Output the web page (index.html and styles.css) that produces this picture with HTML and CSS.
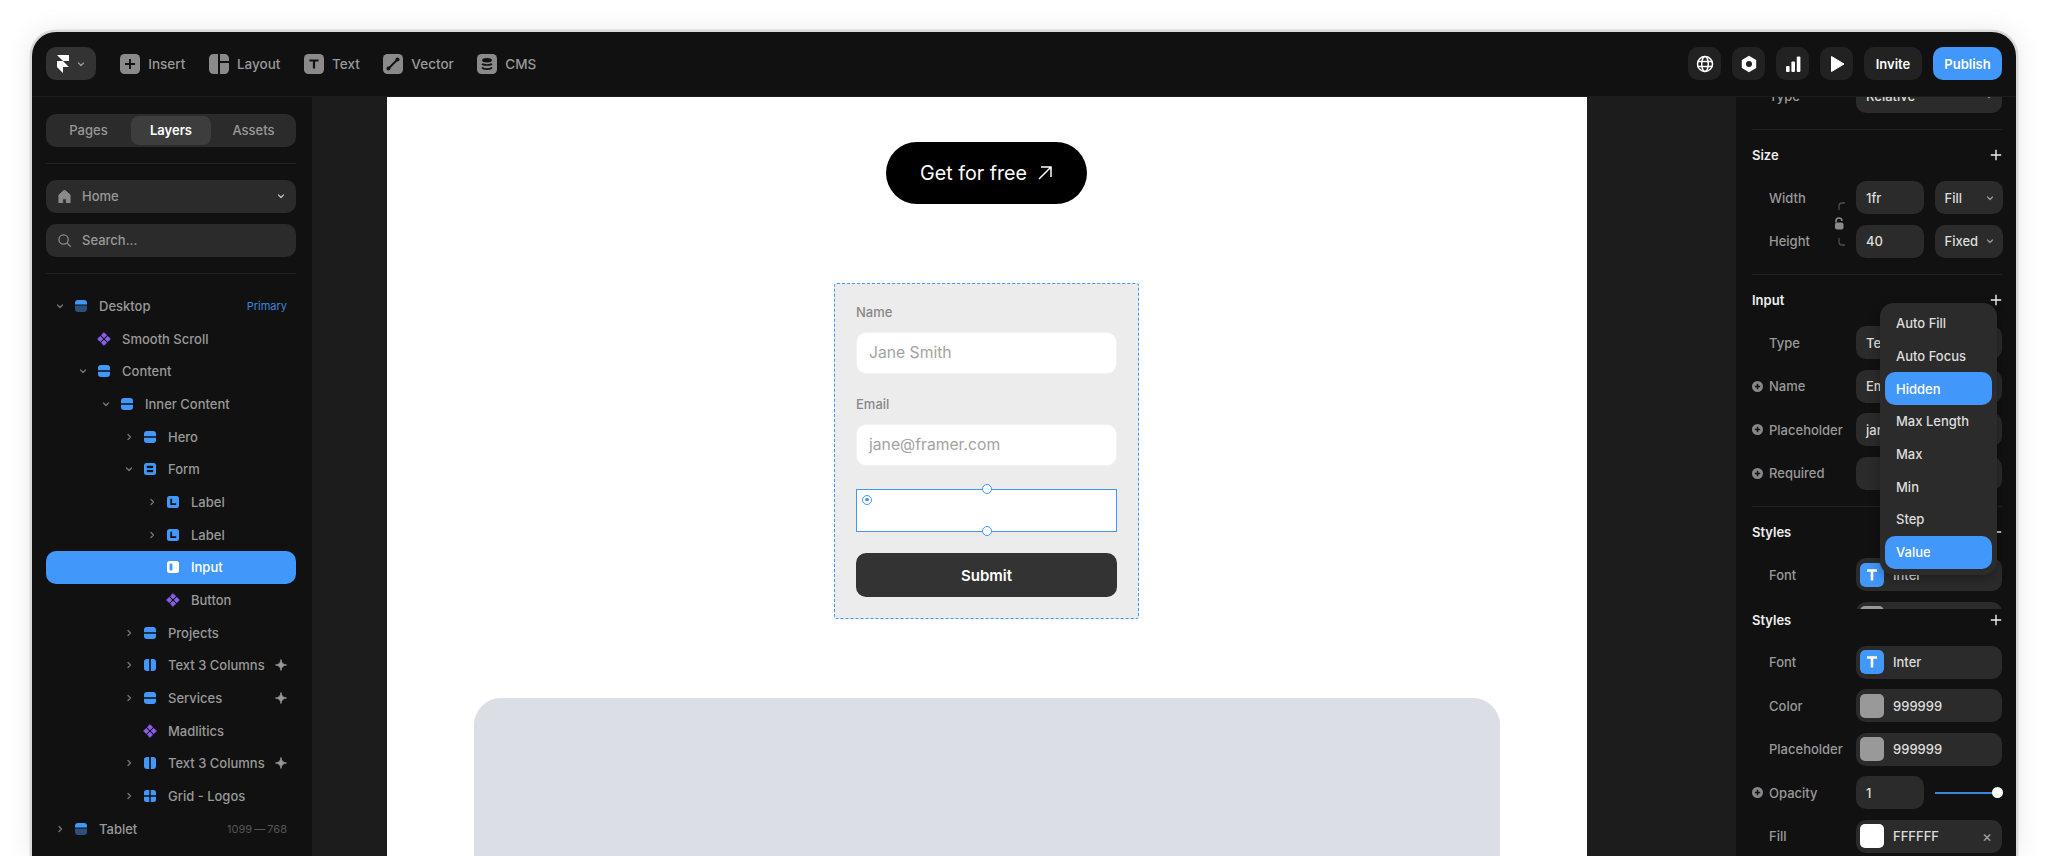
FILE: index.html
```html
<!DOCTYPE html>
<html>
<head>
  <meta charset="utf-8">
  <title>Framer - Form</title>
  <link rel="stylesheet" href="styles.css">
</head>
<body>
  <svg class="defs" width="0" height="0">
    <symbol id="chev-down" viewBox="0 0 12 12"><path d="M3.500 5l2.500 2.500L8.500 5" fill="none" stroke="currentColor" stroke-width="1.300" stroke-linecap="round" stroke-linejoin="round"/></symbol>
    <symbol id="chev-right" viewBox="0 0 12 12"><path d="M5 3.500L7.500 6 5 8.500" fill="none" stroke="currentColor" stroke-width="1.300" stroke-linecap="round" stroke-linejoin="round"/></symbol>
    <symbol id="stack" viewBox="0 0 12 12"><path d="M0 5.200V3a3 3 0 0 1 3-3h6a3 3 0 0 1 3 3v2.200z" fill="#4297fb"/><path d="M0 6.800h12V9a3 3 0 0 1-3 3H3a3 3 0 0 1-3-3z" fill="#4297fb"/></symbol>
    <symbol id="breakpoint" viewBox="0 0 12 12"><path d="M0 4.600V3a3 3 0 0 1 3-3h6a3 3 0 0 1 3 3v1.600z" fill="#4297fb"/><path d="M0 5.400h12V9a3 3 0 0 1-3 3H3a3 3 0 0 1-3-3z" fill="#2a507c"/></symbol>
    <symbol id="form" viewBox="0 0 12 12"><rect width="12" height="12" rx="2.500" fill="#4297fb"/><rect x="2.800" y="2.800" width="6.400" height="2.300" fill="#111"/><rect x="2.800" y="6.900" width="6.400" height="2.300" fill="#111"/></symbol>
    <symbol id="label" viewBox="0 0 12 12"><rect width="12" height="12" rx="2.500" fill="#4297fb"/><path d="M4.200 2.800v5.400h5" fill="none" stroke="#111" stroke-width="1.800"/></symbol>
    <symbol id="input" viewBox="0 0 12 12"><rect width="12" height="12" rx="2.500" fill="#fff"/><rect x="2.600" y="2.600" width="2.800" height="6.800" fill="#4297fb"/></symbol>
    <symbol id="columns" viewBox="0 0 12 12"><path d="M5.200 0v12H3a3 3 0 0 1-3-3V3a3 3 0 0 1 3-3z" fill="#4297fb"/><path d="M6.800 0H9a3 3 0 0 1 3 3v6a3 3 0 0 1-3 3H6.800z" fill="#4297fb"/></symbol>
    <symbol id="grid" viewBox="0 0 12 12"><path d="M5.300 0v5.300H0V2.500A2.500 2.500 0 0 1 2.500 0zM6.700 0h2.800A2.500 2.500 0 0 1 12 2.500v2.800H6.700zM0 6.700h5.300V12H2.500A2.500 2.500 0 0 1 0 9.500zM6.700 6.700H12v2.800A2.500 2.500 0 0 1 9.500 12H6.700z" fill="#4297fb"/></symbol>
    <symbol id="component" viewBox="0 0 13 13"><path d="M6.500 .5l2.500 2.500-2.500 2.500L4 3zM3 4l2.500 2.500L3 9 .5 6.500zM10 4l2.500 2.500L10 9 7.500 6.500zM6.500 7.500L9 10l-2.500 2.500L4 10z" fill="#8b5cf0" stroke="#8b5cf0" stroke-width=".6" stroke-linejoin="round"/></symbol>
    <symbol id="sparkle" viewBox="0 0 12 12"><path d="M6 .5c.5 3.500 2 5 5.500 5.500C8 6.500 6.500 8 6 11.500 5.500 8 4 6.500.5 6 4 5.500 5.500 4 6 .5z" fill="#999" stroke="#999" stroke-width=".8" stroke-linejoin="round"/></symbol>
    <symbol id="plus-circle" viewBox="0 0 11 11"><circle cx="5.500" cy="5.500" r="5.500" fill="#888"/><path d="M5.500 2.800v5.400M2.800 5.500h5.400" stroke="#111" stroke-width="1.500"/></symbol>
    <symbol id="plus" viewBox="0 0 12 12"><path d="M6 .8v10.400M.8 6h10.400" stroke="#eee" stroke-width="1.400"/></symbol>
    <symbol id="type-t" viewBox="0 0 24 24"><rect width="24" height="24" rx="5" fill="#4297fb"/><path d="M7 7.500h10M12 7.500v10" stroke="#fff" stroke-width="2.600"/></symbol>
  </svg>

  <div class="window">
    <header class="toolbar">
      <div class="logo-btn">
        <svg class="logo" viewBox="0 0 12 18"><path d="M0 0h12v6H6zM0 6h6l6 6H6v6L0 12z" fill="#fff"/></svg>
        <svg class="chev"><use href="#chev-down"/></svg>
      </div>
      <div class="tool">
        <svg class="tool-icon" viewBox="0 0 20 20"><rect width="20" height="20" rx="4.500" fill="#8a8a8a"/><path d="M10 5v10M5 10h10" stroke="#111" stroke-width="2"/></svg>
        <span>Insert</span>
      </div>
      <div class="tool">
        <svg class="tool-icon" viewBox="0 0 20 20"><path d="M9 0v20H4.500A4.500 4.500 0 0 1 0 15.500v-11A4.500 4.500 0 0 1 4.500 0zM11 0h4.500A4.500 4.500 0 0 1 20 4.500V7h-9zM11 9h9v6.500a4.500 4.500 0 0 1-4.500 4.500H11z" fill="#8a8a8a"/></svg>
        <span>Layout</span>
      </div>
      <div class="tool">
        <svg class="tool-icon" viewBox="0 0 20 20"><rect width="20" height="20" rx="4.500" fill="#8a8a8a"/><path d="M5.500 6.500h9M10 6.500v8" stroke="#111" stroke-width="2.200"/></svg>
        <span>Text</span>
      </div>
      <div class="tool">
        <svg class="tool-icon" viewBox="0 0 20 20"><rect width="20" height="20" rx="4.500" fill="#8a8a8a"/><path d="M6 14l8-8" stroke="#111" stroke-width="1.800"/><circle cx="5.500" cy="14.500" r="2" fill="#111"/><circle cx="14.500" cy="5.500" r="2" fill="#111"/></svg>
        <span>Vector</span>
      </div>
      <div class="tool">
        <svg class="tool-icon" viewBox="0 0 20 20"><rect width="20" height="20" rx="4.500" fill="#8a8a8a"/><ellipse cx="10" cy="6.200" rx="4.800" ry="2.200" fill="#111"/><path d="M5.200 9.800c1 1.600 8.600 1.600 9.600 0M5.200 13.300c1 2.300 8.600 2.300 9.600 0" fill="none" stroke="#111" stroke-width="1.700"/></svg>
        <span>CMS</span>
      </div>
      <div class="toolbar-right">
        <div class="square-btn">
          <svg viewBox="0 0 18 18"><g fill="none" stroke="#fff" stroke-width="1.500"><circle cx="9" cy="9" r="7.500"/><ellipse cx="9" cy="9" rx="3.300" ry="7.500"/><path d="M1.500 6.500h15M1.500 11.500h15"/></g></svg>
        </div>
        <div class="square-btn">
          <svg viewBox="0 0 18 18"><path fill-rule="evenodd" d="M9 .8l7.200 4.100v8.200L9 17.200l-7.200-4.100V4.900zM9 6a3 3 0 1 0 0 6 3 3 0 0 0 0-6z" fill="#fff"/></svg>
        </div>
        <div class="square-btn">
          <svg viewBox="0 0 18 18"><rect x="2" y="11" width="3.600" height="6" rx="1" fill="#fff"/><rect x="7.400" y="6.500" width="3.600" height="10.500" rx="1" fill="#fff"/><rect x="12.800" y="1.500" width="3.600" height="15.500" rx="1" fill="#fff"/></svg>
        </div>
        <div class="square-btn">
          <svg viewBox="0 0 18 18"><path d="M3.500 1.500L16 9 3.500 16.500z" fill="#fff" stroke="#fff" stroke-linejoin="round"/></svg>
        </div>
        <div class="text-btn invite">Invite</div>
        <div class="text-btn publish">Publish</div>
      </div>
    </header>

    <div class="main">
      <aside class="left-panel">
        <div class="tabs">
          <div class="tab">Pages</div>
          <div class="tab active">Layers</div>
          <div class="tab">Assets</div>
        </div>
        <hr class="rule">
        <div class="pill">
          <svg class="pill-icon" viewBox="0 0 14 14"><path d="M7 0l6 5.200V14H9V9.500H5V14H1V5.200z" fill="#8a8a8a" stroke="#8a8a8a" stroke-linejoin="round"/></svg>
          <span>Home</span>
          <svg class="chev pill-chev"><use href="#chev-down"/></svg>
        </div>
        <div class="pill">
          <svg class="pill-icon" viewBox="0 0 14 14"><circle cx="6" cy="6" r="5" fill="none" stroke="#8a8a8a" stroke-width="1.400"/><path d="M9.800 9.800l3.400 3.400" stroke="#8a8a8a" stroke-width="1.400" stroke-linecap="round"/></svg>
          <span>Search...</span>
        </div>
        <hr class="rule">

        <div class="tree">
          <div class="row d0"><svg class="chev"><use href="#chev-down"/></svg><svg class="node"><use href="#breakpoint"/></svg><span class="name">Desktop</span><span class="tag">Primary</span></div>
          <div class="row d1"><span class="chev"></span><svg class="node comp"><use href="#component"/></svg><span class="name">Smooth Scroll</span></div>
          <div class="row d1"><svg class="chev"><use href="#chev-down"/></svg><svg class="node"><use href="#stack"/></svg><span class="name">Content</span></div>
          <div class="row d2"><svg class="chev"><use href="#chev-down"/></svg><svg class="node"><use href="#stack"/></svg><span class="name">Inner Content</span></div>
          <div class="row d3"><svg class="chev"><use href="#chev-right"/></svg><svg class="node"><use href="#stack"/></svg><span class="name">Hero</span></div>
          <div class="row d3"><svg class="chev"><use href="#chev-down"/></svg><svg class="node"><use href="#form"/></svg><span class="name">Form</span></div>
          <div class="row d4"><svg class="chev"><use href="#chev-right"/></svg><svg class="node"><use href="#label"/></svg><span class="name">Label</span></div>
          <div class="row d4"><svg class="chev"><use href="#chev-right"/></svg><svg class="node"><use href="#label"/></svg><span class="name">Label</span></div>
          <div class="row d4 selected"><span class="chev"></span><svg class="node"><use href="#input"/></svg><span class="name">Input</span></div>
          <div class="row d4"><span class="chev"></span><svg class="node comp"><use href="#component"/></svg><span class="name">Button</span></div>
          <div class="row d3"><svg class="chev"><use href="#chev-right"/></svg><svg class="node"><use href="#stack"/></svg><span class="name">Projects</span></div>
          <div class="row d3"><svg class="chev"><use href="#chev-right"/></svg><svg class="node"><use href="#columns"/></svg><span class="name">Text 3 Columns</span><svg class="spark"><use href="#sparkle"/></svg></div>
          <div class="row d3"><svg class="chev"><use href="#chev-right"/></svg><svg class="node"><use href="#stack"/></svg><span class="name">Services</span><svg class="spark"><use href="#sparkle"/></svg></div>
          <div class="row d3"><span class="chev"></span><svg class="node comp"><use href="#component"/></svg><span class="name">Madlitics</span></div>
          <div class="row d3"><svg class="chev"><use href="#chev-right"/></svg><svg class="node"><use href="#columns"/></svg><span class="name">Text 3 Columns</span><svg class="spark"><use href="#sparkle"/></svg></div>
          <div class="row d3"><svg class="chev"><use href="#chev-right"/></svg><svg class="node"><use href="#grid"/></svg><span class="name">Grid - Logos</span></div>
          <div class="row d0"><svg class="chev"><use href="#chev-right"/></svg><svg class="node"><use href="#breakpoint"/></svg><span class="name">Tablet</span><span class="size-tag">1099 — 768</span></div>
        </div>
      </aside>

      <main class="canvas">
        <div class="page">
          <div class="cta">
            <span>Get for free</span>
            <svg viewBox="0 0 16 16"><path d="M2 14L14 2M4 2h10v10" fill="none" stroke="#fff" stroke-width="1.500"/></svg>
          </div>

          <form class="form-frame">
            <div class="form-label">Name</div>
            <div class="form-input">Jane Smith</div>
            <div class="form-label second">Email</div>
            <div class="form-input">jane@framer.com</div>
            <div class="form-input picked">
              <span class="radio"></span>
              <span class="handle top"></span>
              <span class="handle bottom"></span>
            </div>
            <div class="submit">Submit</div>
          </form>

          <div class="image-card"></div>
        </div>
      </main>

      <aside class="right-panel">
        <div class="props-scroll">
          <div class="field"><span class="field-label">Type</span><div class="box select">Relative<svg class="chev"><use href="#chev-down"/></svg></div></div>
          <hr class="rule props-rule">

          <div class="prop-head"><span>Size</span><svg><use href="#plus"/></svg></div>
          <div class="size-group">
            <div class="field"><span class="field-label">Width</span><div class="pair"><div class="box">1fr</div><div class="box select">Fill<svg class="chev"><use href="#chev-down"/></svg></div></div></div>
            <div class="field"><span class="field-label">Height</span><div class="pair"><div class="box">40</div><div class="box select">Fixed<svg class="chev"><use href="#chev-down"/></svg></div></div></div>
            <svg class="link-icon" viewBox="0 0 12 44"><path d="M11 1H8a3 3 0 0 0-3 3v4M11 43H8a3 3 0 0 1-3-3v-4" fill="none" stroke="#4d4d4d" stroke-width="1.300"/><path d="M2 20.500v-1.500a3 3 0 0 1 6 0" fill="none" stroke="#8a8a8a" stroke-width="1.600"/><rect x="1" y="20.500" width="8.500" height="7" rx="2" fill="#8a8a8a"/></svg>
          </div>
          <hr class="rule props-rule">

          <div class="prop-head"><span>Input</span><svg><use href="#plus"/></svg></div>
          <div class="field"><span class="field-label">Type</span><div class="box">Text</div></div>
          <div class="field"><span class="field-label"><svg class="add"><use href="#plus-circle"/></svg>Name</span><div class="box">Email</div></div>
          <div class="field"><span class="field-label"><svg class="add"><use href="#plus-circle"/></svg>Placeholder</span><div class="box">jane@framer.com</div></div>
          <div class="field"><span class="field-label"><svg class="add"><use href="#plus-circle"/></svg>Required</span><div class="box"></div></div>
          <hr class="rule props-rule">

          <div class="prop-head"><span>Styles</span><svg><use href="#plus"/></svg></div>
          <div class="field"><span class="field-label">Font</span><div class="box with-swatch"><svg class="swatch"><use href="#type-t"/></svg>Inter</div></div>
          <div class="field"><span class="field-label"></span><div class="box with-swatch"><span class="swatch grey"></span></div></div>
        </div>

        <div class="props-fixed">
          <div class="prop-head"><span>Styles</span><svg><use href="#plus"/></svg></div>
          <div class="field"><span class="field-label">Font</span><div class="box with-swatch"><svg class="swatch"><use href="#type-t"/></svg>Inter</div></div>
          <div class="field"><span class="field-label">Color</span><div class="box with-swatch"><span class="swatch grey"></span>999999</div></div>
          <div class="field"><span class="field-label">Placeholder</span><div class="box with-swatch"><span class="swatch grey"></span>999999</div></div>
          <div class="field"><span class="field-label"><svg class="add"><use href="#plus-circle"/></svg>Opacity</span><div class="pair"><div class="box">1</div><div class="slider"><span class="knob"></span></div></div></div>
          <div class="field"><span class="field-label">Fill</span><div class="box with-swatch"><span class="swatch white"></span>FFFFFF<span class="clear">×</span></div></div>
        </div>

        <ul class="menu">
          <li>Auto Fill</li>
          <li>Auto Focus</li>
          <li class="on">Hidden</li>
          <li>Max Length</li>
          <li>Max</li>
          <li>Min</li>
          <li>Step</li>
          <li class="on">Value</li>
        </ul>
      </aside>
    </div>
  </div>
</body>
</html>
```

FILE: styles.css
```css
* {
  box-sizing: border-box;
  font-family: Inter, "Noto Sans", Arial, sans-serif;
}
html, body {
  margin: 0;
  height: 856px;
  overflow: hidden;
  background-color: #fff;
}
.defs {
  position: absolute;
}

/* Window */
.window {
  width: 1984px;
  height: 824px;
  margin: 32px 0 0 32px;
  display: flex;
  flex-direction: column;
  overflow: hidden;
  background-color: #111;
  border-radius: 24px 24px 0 0;
  box-shadow: 0 0 0 2.500px #dadada, 0 0 28px rgba(0, 0, 0, 0.1);
}

/* Toolbar */
.toolbar {
  flex: none;
  height: 65px;
  padding: 0 14px 1px;
  display: flex;
  align-items: center;
  border-bottom: 1px solid #1c1c1c;
}
.logo-btn {
  width: 50px;
  height: 33px;
  margin-right: 24px;
  padding-left: 11px;
  display: flex;
  align-items: center;
  gap: 6px;
  background-color: #333;
  border-radius: 10px;
}
.logo {
  width: 12px;
  height: 18px;
}
.chev {
  flex: none;
  display: block;
  width: 12px;
  height: 12px;
  color: #999;
}
.tool {
  margin-right: 23.300px;
  display: flex;
  align-items: center;
  gap: 8.300px;
  color: #999;
  font-size: 13.500px;
  font-weight: 500;
}
.tool-icon {
  width: 20px;
  height: 20px;
}
.toolbar-right {
  margin-left: auto;
  display: flex;
  gap: 11px;
}
.square-btn {
  width: 33px;
  height: 33px;
  display: flex;
  align-items: center;
  justify-content: center;
  background-color: #222;
  border-radius: 10px;
}
.square-btn svg {
  width: 18px;
  height: 18px;
}
.text-btn {
  height: 33px;
  display: flex;
  align-items: center;
  justify-content: center;
  color: #fff;
  font-size: 13px;
  font-weight: 600;
  border-radius: 10px;
}
.invite {
  width: 58px;
  background-color: #222;
}
.publish {
  width: 69px;
  background-color: #4297fb;
}

.main {
  flex: 1;
  display: flex;
  min-height: 0;
  overflow: hidden;
}

/* Left panel */
.left-panel {
  flex: none;
  width: 280px;
  padding: 16.500px 16px 0 14px;
  background-color: #111;
}
.tabs {
  height: 33px;
  padding: 2px;
  display: flex;
  background-color: #2b2b2b;
  border-radius: 10px;
}
.tab {
  flex: 1;
  display: flex;
  align-items: center;
  justify-content: center;
  color: #999;
  font-size: 13px;
  font-weight: 500;
  border-radius: 8px;
}
.tab:first-child {
  padding-right: 2px;
}
.tab:last-child {
  padding-left: 2px;
}
.tab.active {
  flex: none;
  width: 80px;
  color: #fff;
  font-weight: 600;
  background-color: #3d3d3d;
}
.rule {
  height: 1px;
  margin: 16px 0;
  border: 0;
  background-color: #232323;
}
.pill {
  height: 33px;
  margin-bottom: 11px;
  padding: 0 9px 0 12px;
  display: flex;
  align-items: center;
  color: #999;
  font-size: 13px;
  font-weight: 500;
  background-color: #2b2b2b;
  border-radius: 10px;
}
.pill:last-of-type {
  margin-bottom: 0;
}
.pill-icon {
  width: 13px;
  height: 13px;
  margin-right: 11px;
}
.pill-chev {
  margin-left: auto;
  color: #bbb;
}
.tree {
  margin-top: 0.300px;
}
.row {
  height: 32.700px;
  padding-right: 9px;
  display: flex;
  align-items: center;
  color: #999;
  font-size: 13px;
  font-weight: 500;
  border-radius: 10px;
}
.row .chev {
  margin-right: 9px;
  color: #777;
}
.node {
  flex: none;
  width: 12px;
  height: 12px;
  margin-right: 12px;
}
.node.comp {
  width: 14px;
  height: 14px;
  margin: 0 11px 0 -1px;
}
.name {
  white-space: nowrap;
}
.d0 { padding-left: 8px; }
.d1 { padding-left: 31px; }
.d2 { padding-left: 54px; }
.d3 { padding-left: 77px; }
.d4 { padding-left: 100px; }
.row.selected {
  color: #fff;
  background-color: #4297fb;
}
.tag {
  margin-left: auto;
  color: #3b86dc;
  font-size: 11px;
  font-weight: 400;
}
.size-tag {
  margin-left: auto;
  color: #555;
  font-size: 11px;
  font-weight: 400;
  word-spacing: -1px;
}
.spark {
  width: 12px;
  height: 12px;
  margin-left: auto;
}

/* Canvas */
.canvas {
  flex: 1;
  min-width: 0;
  background-color: #1c1c1c;
}
.page {
  width: 1200px;
  height: 100%;
  margin-left: 74.500px;
  padding-top: 45px;
  display: flex;
  flex-direction: column;
  align-items: center;
  overflow: hidden;
  background-color: #fff;
}
.cta {
  flex: none;
  width: 201px;
  height: 62px;
  margin-bottom: 79px;
  display: flex;
  align-items: center;
  justify-content: center;
  gap: 10px;
  color: #fff;
  font-size: 19.700px;
  background-color: #000;
  border-radius: 31px;
}
.cta svg {
  width: 16px;
  height: 16px;
}
.form-frame {
  flex: none;
  width: 305px;
  height: 336px;
  padding: 18.500px 21px 0;
  margin-bottom: 79px;
  background-color: #ececec;
  border: 1px dashed #4297fb;
  border-radius: 3px;
}
.form-label {
  height: 18px;
  margin-bottom: 11px;
  color: #888;
  font-size: 13px;
  font-weight: 500;
  line-height: 18px;
}
.form-label.second {
  margin-top: 21px;
}
.form-input {
  position: relative;
  height: 42px;
  padding-left: 12px;
  display: flex;
  align-items: center;
  color: #a3a3a3;
  font-size: 15.700px;
  background-color: #fff;
  border: 1px solid #f2f2f2;
  border-radius: 10px;
}
.form-input.picked {
  height: 43px;
  margin-top: 23px;
  border: 1.500px solid #4297fb;
  border-radius: 0;
}
.radio {
  position: absolute;
  left: 5px;
  top: 5px;
  width: 10px;
  height: 10px;
  display: flex;
  align-items: center;
  justify-content: center;
  background-color: #fff;
  border: 1.500px solid #4297fb;
  border-radius: 50%;
}
.radio::after {
  content: "";
  width: 3.500px;
  height: 3.500px;
  background-color: #4297fb;
  border-radius: 50%;
}
.handle {
  position: absolute;
  left: 50%;
  width: 10px;
  height: 10px;
  margin-left: -5px;
  background-color: #fff;
  border: 1.500px solid #4297fb;
  border-radius: 50%;
}
.handle.top { top: -5.500px; }
.handle.bottom { bottom: -5.500px; }
.submit {
  height: 44px;
  margin-top: 21.500px;
  display: flex;
  align-items: center;
  justify-content: center;
  color: #fff;
  font-size: 15px;
  font-weight: 600;
  background-color: #333;
  border-radius: 10px;
}
.image-card {
  flex: none;
  width: 1026px;
  height: 400px;
  background-color: #dcdee6;
  border-radius: 27px;
}

/* Right panel */
.right-panel {
  position: relative;
  flex: none;
  width: 280px;
  background-color: #111;
}
.props-scroll {
  height: 512px;
  padding: 0 14px 0 16px;
  display: flex;
  flex-direction: column;
  overflow: hidden;
}
.props-scroll > * {
  flex: none;
}
.props-scroll > .field:first-child {
  margin-top: -17px;
}
.props-fixed {
  padding: 3px 14px 0 16px;
}
.field {
  height: 32.700px;
  margin-bottom: 10.800px;
  display: flex;
  align-items: center;
}
.field-label {
  position: relative;
  width: 104px;
  flex: none;
  padding-left: 17px;
  color: #999;
  font-size: 13px;
  font-weight: 500;
  white-space: nowrap;
}
.add {
  position: absolute;
  left: 0;
  top: 50%;
  width: 11px;
  height: 11px;
  margin-top: -5.500px;
}
.box {
  flex: 1;
  height: 100%;
  padding: 0 10px;
  display: flex;
  align-items: center;
  color: #ddd;
  font-size: 13px;
  font-weight: 500;
  white-space: nowrap;
  background-color: #2b2b2b;
  border-radius: 10px;
}
.pair {
  flex: 1;
  height: 100%;
  display: grid;
  grid-template-columns: 67.500px 68px;
  column-gap: 11px;
}
.select {
  justify-content: space-between;
  padding-right: 7px;
}
.with-swatch {
  padding-left: 4px;
  gap: 9px;
}
.swatch {
  flex: none;
  display: block;
  width: 24px;
  height: 24px;
  border-radius: 5px;
}
.swatch.grey { background-color: #999; }
.swatch.white { background-color: #fff; }
.clear {
  margin-left: auto;
  color: #999;
  font-size: 15px;
}
.slider {
  position: relative;
  align-self: center;
  height: 2px;
  background-color: #3b86dc;
}
.knob {
  position: absolute;
  right: 0;
  top: -4.500px;
  width: 11px;
  height: 11px;
  background-color: #fff;
  border-radius: 50%;
}
.prop-head {
  height: 16px;
  margin-bottom: 18px;
  display: flex;
  align-items: center;
  justify-content: space-between;
  color: #eee;
  font-size: 13px;
  font-weight: 600;
}
.prop-head svg {
  width: 12px;
  height: 12px;
}
.props-rule {
  margin: 6px 0 17px;
}
.size-group {
  position: relative;
}
.link-icon {
  position: absolute;
  left: 82px;
  top: 21px;
  width: 12px;
  height: 44px;
}

/* Dropdown over the panel */
.menu {
  position: absolute;
  left: 144px;
  top: 206px;
  width: 117px;
  margin: 0;
  padding: 4px 5px 6px;
  list-style: none;
  background-color: #2b2b2b;
  border-radius: 14px;
  box-shadow: 0 4px 12px rgba(0, 0, 0, 0.3);
}
.menu li {
  height: 32.700px;
  padding-left: 11px;
  display: flex;
  align-items: center;
  color: #ddd;
  font-size: 13px;
  font-weight: 500;
  border-radius: 10px;
}
.menu li.on {
  color: #fff;
  background-color: #4297fb;
}
```
